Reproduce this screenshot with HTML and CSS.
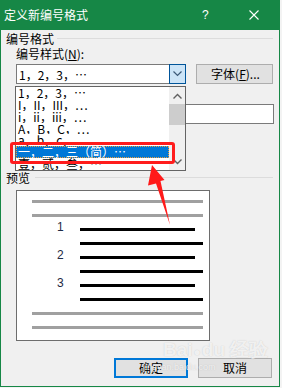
FILE: index.html
```html
<!DOCTYPE html>
<html>
<head>
<meta charset="utf-8">
<link rel="stylesheet" href="styles.css">
</head>
<body>
<div class="win">
  <div class="titlebar">
    <span class="title">定义新编号格式</span>
    <span class="help">?</span>
    <svg class="close" width="10" height="10" viewBox="0 0 10 10"><path d="M0.5 0.5 L9.5 9.5 M9.5 0.5 L0.5 9.5" stroke="#fff" stroke-width="1.1" fill="none"/></svg>
  </div>
  <div class="content">
    <div class="group-h"><span>编号格式</span><i class="rule"></i></div>
    <div class="indent">
      <div class="lbl">编号样式(<u>N</u>):</div>
      <div class="row">
        <div class="combo">
          <span class="combo-text">1，2，3，…</span>
          <span class="dd"><svg width="9" height="6" viewBox="0 0 9 6"><path d="M0.5 0.5 L4.5 4.5 L8.5 0.5" stroke="#3d5a78" stroke-width="1.2" fill="none"/></svg></span>
        </div>
        <div class="btn font-btn">字体(<u>F</u>)...</div>
      </div>
      <div class="lbl lbl2">编号格式(<u>O</u>):</div>
      <div class="textbox"></div>
    </div>
    <div class="group-h preview-h"><span>预览</span><i class="rule"></i></div>
    <div class="preview">
      <div class="pl gray"></div>
      <div class="pl gray"></div>
      <div class="prow"><span class="num">1</span><i class="bl short"></i></div>
      <div class="prow"><span class="num"></span><i class="bl long"></i></div>
      <div class="prow"><span class="num">2</span><i class="bl short"></i></div>
      <div class="prow"><span class="num"></span><i class="bl long"></i></div>
      <div class="prow"><span class="num">3</span><i class="bl short"></i></div>
      <div class="prow"><span class="num"></span><i class="bl long"></i></div>
      <div class="pl gray"></div>
      <div class="pl gray"></div>
    </div>
    <div class="actions">
      <div class="btn ok">确定</div>
      <div class="btn">取消</div>
    </div>
  </div>

  <div class="dropdown">
    <div class="items">
      <div class="item">1，2，3，…</div>
      <div class="item">I，II，III，…</div>
      <div class="item">i，ii，iii，…</div>
      <div class="item">A，B，C，…</div>
      <div class="item">a，b，c，…</div>
      <div class="item sel"><span>一，二，三（简）…</span></div>
      <div class="item">壹，贰，叁，…</div>
    </div>
    <div class="sbar">
      <span class="sarrow"><svg width="9" height="6" viewBox="0 0 9 6"><path d="M0.5 5.5 L4.5 1.5 L8.5 5.5" stroke="#606060" stroke-width="1.4" fill="none"/></svg></span>
      <span class="thumb"></span>
      <span class="sfill"></span>
      <span class="sarrow"><svg width="9" height="6" viewBox="0 0 9 6"><path d="M0.5 0.5 L4.5 4.5 L8.5 0.5" stroke="#606060" stroke-width="1.4" fill="none"/></svg></span>
    </div>
  </div>
  <div class="redbox"></div>
  <svg class="arrow" width="282" height="388" viewBox="0 0 282 388"><polygon points="152,165 164.5,180 160.5,181 170,225 156,183.5 148,185.5" fill="#ff1a1a"/></svg>
  <div class="watermark"><div class="wm1">Bai<span class="paw">●</span>du 经验</div><div class="wm2">jingyan.baidu.com</div></div>
</div>
</body>
</html>
```
FILE: styles.css
```css
* { box-sizing: border-box; }
html, body { margin: 0; padding: 0; background: #f3f3f3; }
body {
  width: 282px; height: 388px; overflow: hidden;
  font-family: "Noto Sans CJK SC", "Microsoft YaHei", sans-serif;
  font-size: 12px; color: #000;
}
.win {
  position: relative;
  width: 280px; height: 387px;
  border: 1px solid #168746;
  border-top: none;
  background: #f0f0f0;
  display: flex; flex-direction: column;
}
.titlebar {
  height: 30px; background: #168746; color: #fff;
  display: flex; align-items: center;
  margin: 0 -1px;
  padding-left: 4px;
}
.title { font-size: 12px; line-height: 12px; flex: 1; }
.help { font-family: "Liberation Sans", sans-serif; font-size: 12px; width: 10px; margin-right: 37px; }
.close { margin-right: 21px; }
.content { flex: 1; display: flex; flex-direction: column; padding: 3px 6px 0 5px; }
.group-h { display: flex; align-items: center; height: 12px; line-height: 12px; }
.group-h span { flex: none; }
.rule { flex: 1; height: 1px; background: #dcdcdc; margin-left: 3px; margin-top: -1px; }
.indent { padding-left: 10px; }
.lbl { margin-top: 3px; height: 12px; line-height: 12px; }
.lbl u { text-decoration: underline; }
.row { display: flex; margin-top: 4px; height: 20px; }
.combo {
  width: 170px; height: 20px; background: #fff; border: 1px solid #7a7a7a;
  display: flex; align-items: center;
}
.combo-text { flex: 1; padding-left: 2px; }
.dd {
  width: 17px; height: 20px; margin: -1px -1px -1px 0;
  background: #cce4f7; border: 1px solid #005499;
  display: flex; align-items: center; justify-content: center;
}
.btn {
  width: 74px; height: 20px; background: #e1e1e1; border: 1px solid #adadad;
  display: flex; align-items: center; justify-content: center; line-height: 12px;
}
.font-btn { margin-left: 10px; width: 77px; padding-left: 2px; }
.lbl2 { margin-top: 5px; }
.textbox { margin-top: 3px; width: 258px; height: 20px; background: #fff; border: 1px solid #7a7a7a; }
.preview-h { margin-top: 48px; }
.preview-h .rule { margin-left: 5px; }
.preview {
  margin-top: 6px; margin-left: 10px;
  width: 194px; height: 151px; background: #fff; border: 1px solid #6d6d6d;
  display: flex; flex-direction: column; gap: 11px;
  padding: 9px 0 0 15px;
}
.pl { height: 3px; }
.gray { width: 171px; background: #a0a0a0; }
.prow { height: 3px; display: flex; align-items: center; }
.num {
  width: 48px; padding-left: 25px; line-height: 3px; margin-top: -4px;
  font-family: "Liberation Sans", sans-serif; font-size: 12px; color: #1e2a44;
}
.bl { height: 3px; background: #000; }
.short { width: 115px; }
.long { width: 123px; }
.actions { display: flex; gap: 10px; margin-top: 17px; padding-left: 108px; }
.ok { border: 2px solid #0078d7; }

.dropdown {
  position: absolute; left: 14px; top: 86px;
  width: 171px; height: 85px;
  background: #fff; border: 1px solid #646464;
  display: flex;
}
.items { flex: 1; display: flex; flex-direction: column; }
.item { height: 12px; line-height: 12px; padding-left: 2px; white-space: nowrap; overflow: hidden; font-size: 12px; }
.item.sel { padding-left: 0; }
.item.sel span {
  display: block; height: 12px; background: #0078d7; color: #fff;
  border: 1px dotted #e8a040; line-height: 10px; padding-left: 1px;
}
.sbar { width: 16px; background: #f0f0f0; display: flex; flex-direction: column; align-items: center; }
.sarrow { height: 17px; display: flex; align-items: center; justify-content: center; }
.thumb { width: 16px; height: 21px; background: #cdcdcd; }
.sfill { flex: 1; }
.redbox {
  position: absolute; left: 9px; top: 142px; width: 165px; height: 22px;
  border: 3px solid #ff1c1c; border-radius: 3px;
}
.arrow { position: absolute; left: -1px; top: 0; }
.watermark {
  position: absolute; left: 162px; top: 340px; color: rgba(255,255,255,0.75);
  text-shadow: 0 0 1px rgba(150,150,150,0.5);
  font-family: "Liberation Sans", sans-serif; pointer-events: none;
}
.wm1 { font-size: 19px; font-weight: bold; line-height: 20px; }
.paw { font-size: 12px; margin: 0 1px; }
.wm2 { font-size: 9px; line-height: 10px; margin-left: -20px; }
```
